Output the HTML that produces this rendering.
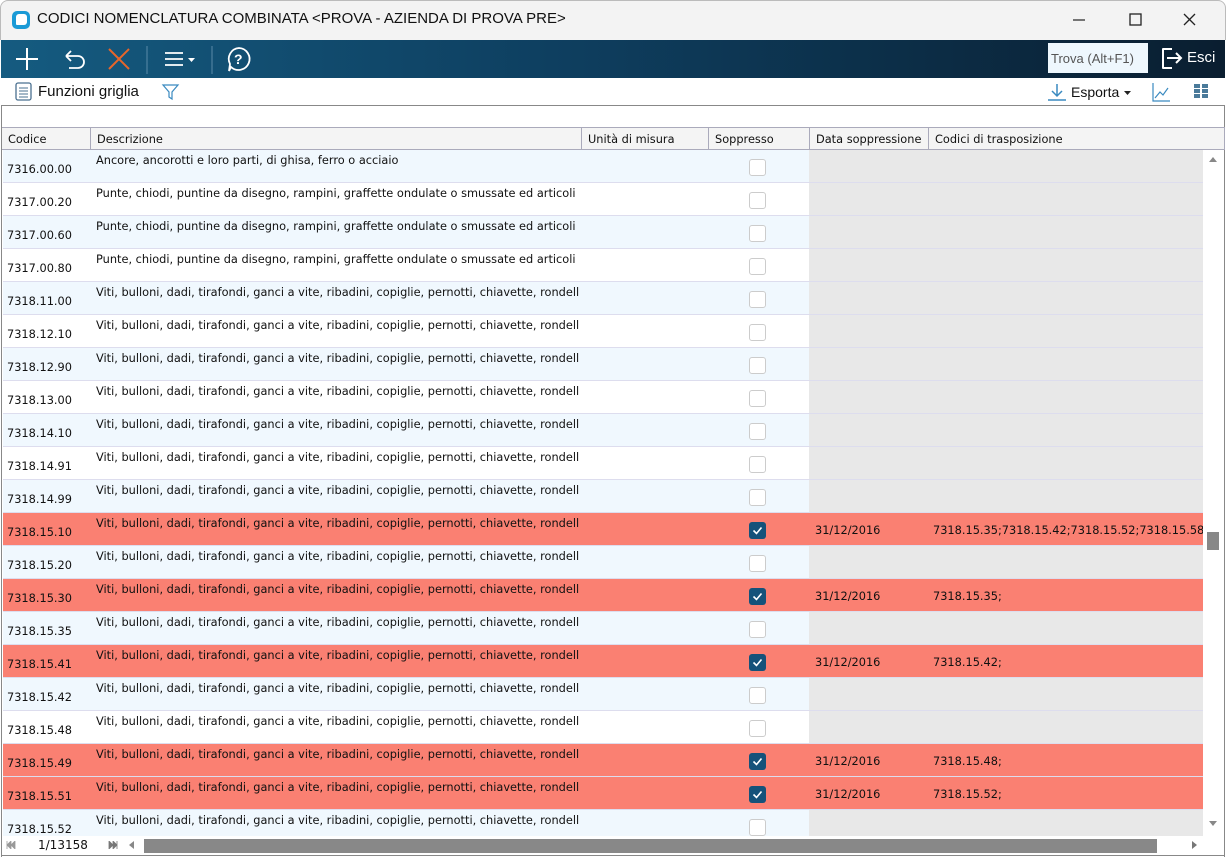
<!DOCTYPE html>
<html><head><meta charset="utf-8"><style>
*{box-sizing:border-box;margin:0;padding:0}
body{width:1226px;height:857px;overflow:hidden;background:#fff;font-family:"DejaVu Sans","Liberation Sans",sans-serif;font-size:11.35px;color:#111;position:relative}
.a{position:absolute}
#title{left:0;top:0;width:1226px;height:40px;background:#f3f3f3;border:1px solid #bbb;border-bottom:none;border-radius:8px 8px 0 0}
#tb{left:1px;top:40px;width:1224px;height:38px;background:linear-gradient(90deg,#155b80 0%,#0e3f60 45%,#0a1e30 100%)}
#tb2{left:1px;top:78px;width:1224px;height:28px;background:#fff;border-bottom:1px solid #888}
.hd{top:127px;height:23px;background:#f4f4f4;border-right:1px solid #aab;border-bottom:1px solid #aab;border-top:1px solid #aab;padding:4px 0 0 6px}
.row{position:absolute;left:3px;width:1200px;height:33px;border-bottom:1px solid #dde;overflow:hidden}
.c{position:absolute;top:0;height:32px}
.code{left:4px;top:12px;position:absolute}
.desc{left:93px;top:3px;position:absolute;white-space:nowrap}
.gray{left:806px;width:394px;background:#e8e8e8}
.cb{position:absolute;left:746px;top:9px;width:17px;height:17px;border:1.5px solid #ccc;border-radius:3px;background:#fff}
.cbk{position:absolute;left:746px;top:9px;width:17px;height:17px;border-radius:3px;background:#15527a}
.dt{position:absolute;left:812px;top:10px}
.tr{position:absolute;left:930px;top:10px;white-space:nowrap}
</style></head><body>
<div id="title" class="a"></div>
<div class="a" style="left:12px;top:11px;width:18px;height:18px;background:#1a9ad6;border-radius:5px"><div style="position:absolute;left:4px;top:3px;width:11px;height:11px;background:#fff;border-radius:3px 3px 3px 1px"></div></div>
<div class="a" style="left:37px;top:10px;font-size:15px;font-family:'Liberation Sans',sans-serif;color:#111">CODICI NOMENCLATURA COMBINATA &lt;PROVA - AZIENDA DI PROVA PRE&gt;</div>
<svg class="a" style="left:1060px;top:8px" width="150" height="24"><path d="M13 12h12" stroke="#222" stroke-width="1.2"/><rect x="70" y="6" width="11" height="11" fill="none" stroke="#222" stroke-width="1.3"/><path d="M124 6l11 11M135 6l-11 11" stroke="#222" stroke-width="1.3"/></svg>
<div id="tb" class="a"></div>
<svg class="a" style="left:0;top:40px" width="270" height="38">
<path d="M16 19h22M27 8v22" stroke="#fff" stroke-width="2"/>
<path d="M66 16h12a6 6 0 0 1 0 12h-9M66 16l5-5M66 16l5 5" stroke="#fff" stroke-width="1.8" fill="none"/>
<path d="M109 9l20 20M129 9l-20 20" stroke="#e8662a" stroke-width="2"/>
<path d="M147 6v28M212 6v28" stroke="#5a8aa8" stroke-width="1"/>
<path d="M165 13h18M165 19h18M165 25h18" stroke="#fff" stroke-width="1.8"/><path d="M188 18h7l-3.5 4z" fill="#fff"/>
<path d="M239 8a11 11 0 1 1-8 19l-2 4 1-7a11 11 0 0 1 9-16z" stroke="#fff" stroke-width="1.8" fill="none"/>
<text x="234" y="24" fill="#fff" font-size="14" font-weight="bold" font-family="Liberation Sans">?</text>
</svg>
<div class="a" style="left:1048px;top:43px;width:100px;height:30px;background:#eef7fd;color:#555;font-size:13px;font-family:'Liberation Sans',sans-serif;padding:8px 0 0 3px">Trova (Alt+F1)</div>
<svg class="a" style="left:1158px;top:45px" width="28" height="28"><path d="M14 4H5v19h9" stroke="#fff" stroke-width="2" fill="none" stroke-linejoin="round"/><path d="M9 13h14M18 8l5 5-5 5" stroke="#fff" stroke-width="2" fill="none"/></svg>
<div class="a" style="left:1187px;top:49px;color:#fff;font-size:15px;font-family:'Liberation Sans',sans-serif">Esci</div>
<div id="tb2" class="a"></div>
<svg class="a" style="left:14px;top:82px" width="20" height="20"><rect x="2" y="1" width="15" height="17" rx="2" fill="none" stroke="#4a7090" stroke-width="1.3"/><path d="M5 6h9M5 9h9M5 12h9M5 15h9" stroke="#4a7090"/></svg>
<div class="a" style="left:38px;top:83px;font-size:15px;font-family:'Liberation Sans',sans-serif">Funzioni griglia</div>
<svg class="a" style="left:161px;top:82px" width="20" height="20"><path d="M2 3h15l-6 7v7l-3-2v-5z" fill="none" stroke="#3a8ac0" stroke-width="1.2"/></svg>
<svg class="a" style="left:1046px;top:82px" width="22" height="20"><path d="M11 2v12M6 9l5 5 5-5M2 18h18" stroke="#3a8ac0" stroke-width="1.5" fill="none"/></svg>
<div class="a" style="left:1071px;top:84px;font-size:14px;font-family:'Liberation Sans',sans-serif">Esporta</div>
<svg class="a" style="left:1124px;top:90px" width="8" height="6"><path d="M0 1h7l-3.5 4z" fill="#222"/></svg>
<svg class="a" style="left:1151px;top:82px" width="20" height="20"><path d="M2 1v18h17M4 16l5-6 3 3 5-7" stroke="#3a8ac0" fill="none" stroke-width="1.2"/></svg>
<svg class="a" style="left:1194px;top:84px" width="16" height="16"><g fill="#4a7a9a"><rect x="0" y="0" width="6" height="4"/><rect x="8" y="0" width="6" height="4"/><rect x="0" y="5" width="6" height="4"/><rect x="8" y="5" width="6" height="4"/><rect x="0" y="10" width="6" height="4"/><rect x="8" y="10" width="6" height="4"/></g></svg>
<div class="a" style="left:1px;top:107px;width:1224px;height:20px;background:#fff"></div>
<div class="a" style="left:1px;top:106px;width:1px;height:751px;background:#888"></div>
<div class="a" style="left:1224px;top:106px;width:1px;height:751px;background:#888"></div>
<div class="a hd" style="left:2px;width:89px">Codice</div>
<div class="a hd" style="left:91px;width:491px">Descrizione</div>
<div class="a hd" style="left:582px;width:127px">Unità di misura</div>
<div class="a hd" style="left:709px;width:101px">Soppresso</div>
<div class="a hd" style="left:810px;width:119px;white-space:nowrap;overflow:hidden">Data soppressione</div>
<div class="a hd" style="left:929px;width:296px">Codici di trasposizione</div>
<div id="rows"></div>
<script>
var V="Viti, bulloni, dadi, tirafondi, ganci a vite, ribadini, copiglie, pernotti, chiavette, rondell",P="Punte, chiodi, puntine da disegno, rampini, graffette ondulate o smussate ed articoli";
var R=[["7316.00.00","Ancore, ancorotti e loro parti, di ghisa, ferro o acciaio"],["7317.00.20",P],["7317.00.60",P],["7317.00.80",P],["7318.11.00",V],["7318.12.10",V],["7318.12.90",V],["7318.13.00",V],["7318.14.10",V],["7318.14.91",V],["7318.14.99",V],["7318.15.10",V,"7318.15.35;7318.15.42;7318.15.52;7318.15.58"],["7318.15.20",V],["7318.15.30",V,"7318.15.35;"],["7318.15.35",V],["7318.15.41",V,"7318.15.42;"],["7318.15.42",V],["7318.15.48",V],["7318.15.49",V,"7318.15.48;"],["7318.15.51",V,"7318.15.52;"],["7318.15.52",V]];
var h="";R.forEach(function(r,i){var t=150+33*i,hl=r.length>2,bg=hl?"#fa8072":(i%2?"#fff":"#f0f8fe");
h+='<div class="row" style="top:'+t+'px;background:'+bg+'">'+(hl?'':'<div class="c gray"></div>')+'<span class="code">'+r[0]+'</span><span class="desc">'+r[1]+'</span>'+(hl?'<div class="cbk"><svg width="17" height="17"><path d="M4.5 8.5l3 3 5-6" stroke="#fff" stroke-width="1.6" fill="none"/></svg></div><span class="dt">31/12/2016</span><span class="tr">'+r[2]+'</span>':'<div class="cb"></div>')+'</div>';});
document.getElementById("rows").innerHTML=h;
</script>
<div class="a" style="left:1203px;top:150px;width:21px;height:686px;background:#fff"></div>
<svg class="a" style="left:1208px;top:156px" width="10" height="8"><path d="M1 6h8L5 1z" fill="#888"/></svg>
<div class="a" style="left:1207px;top:532px;width:12px;height:18px;background:#888"></div>
<svg class="a" style="left:1208px;top:820px" width="10" height="8"><path d="M1 1h8L5 6z" fill="#888"/></svg>
<div class="a" style="left:2px;top:836px;width:1222px;height:20px;background:#fff;border-bottom:1px solid #888"></div>
<svg class="a" style="left:6px;top:841px" width="10" height="8"><path d="M1 0v8M9 0v8L5 4zM5 0v8L1 4z" fill="#999" stroke="#999" stroke-width=".8"/></svg>
<div class="a" style="left:38px;top:838px;font-size:12px">1/13158</div>
<svg class="a" style="left:108px;top:841px" width="10" height="8"><path d="M1 0v8l4-4zM5 0v8l4-4zM9 0v8" fill="#777" stroke="#777" stroke-width=".8"/></svg>
<svg class="a" style="left:128px;top:840px" width="8" height="10"><path d="M6 1v8L1 5z" fill="#888"/></svg>
<div class="a" style="left:144px;top:839px;width:1013px;height:14px;background:#888"></div>
<svg class="a" style="left:1190px;top:840px" width="8" height="10"><path d="M2 1v8l5-4z" fill="#777"/></svg>
</body></html>
